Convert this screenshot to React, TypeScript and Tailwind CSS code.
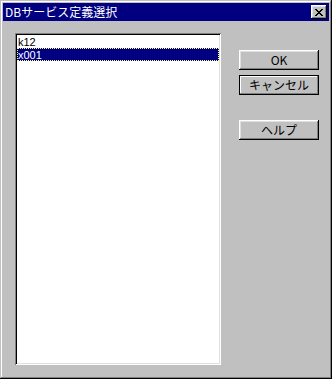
import React, { useState } from 'react';

const FONT = { fontFamily: '"Noto Sans CJK JP", "Liberation Sans", sans-serif' };

const items = ['k12', 'x001'];

function Win95Button({ label, isDefault = false }: { label: string; isDefault?: boolean }) {
  return (
    <button
      className={`w-[80px] h-[20px] bg-[#c0c0c0] text-[12px] leading-[12px] text-black flex items-center justify-center ${
        isDefault
          ? 'border border-black shadow-[inset_-1px_-1px_#808080,inset_1px_1px_#fff]'
          : 'shadow-[inset_-1px_-1px_#000,inset_1px_1px_#fff,inset_-2px_-2px_#808080,inset_2px_2px_#dfdfdf]'
      }`}
    >
      {label}
    </button>
  );
}

export default function App() {
  const [selected, setSelected] = useState(1);

  return (
    <div
      className="w-[332px] h-[379px] bg-[#c0c0c0] p-[3px] flex flex-col shadow-[inset_-1px_-1px_#000,inset_1px_1px_#c0c0c0,inset_-2px_-2px_#808080,inset_2px_2px_#fff]"
      style={FONT}
    >
      {/* Title bar */}
      <div className="h-[18px] bg-[#000080] flex items-center pl-[2px] pr-[2px] shrink-0">
        <span className="text-white text-[12px] leading-[12px] flex-1">DBサービス定義選択</span>
        <button className="w-[16px] h-[14px] bg-[#c0c0c0] flex items-center justify-center shadow-[inset_-1px_-1px_#000,inset_1px_1px_#fff,inset_-2px_-2px_#808080,inset_2px_2px_#dfdfdf]">
          <svg width="8" height="7" viewBox="0 0 8 7" shapeRendering="crispEdges">
            <path d="M0 0h2v1h-2zM6 0h2v1h-2zM1 1h2v1h-2zM5 1h2v1h-2zM2 2h4v1h-4zM3 3h2v1h-2zM2 4h4v1h-4zM1 5h2v1h-2zM5 5h2v1h-2zM0 6h2v1h-2zM6 6h2v1h-2z" fill="#000" />
          </svg>
        </button>
      </div>

      {/* Body */}
      <div className="flex pl-[12px] pt-[12px]">
        <div className="w-[206px] h-[332px] bg-white p-[2px] shadow-[inset_1px_1px_#808080,inset_-1px_-1px_#fff,inset_2px_2px_#000,inset_-2px_-2px_#dfdfdf]">
          {items.map((it, i) => (
            <div
              key={it}
              onClick={() => setSelected(i)}
              className={`h-[13px] pl-[1px] flex items-center ${
                i === selected
                  ? 'bg-[#000080] text-white outline-1 outline-dotted outline-[#ffff80] -outline-offset-1'
                  : 'text-black'
              }`}
            >
              <span className="text-[11px] leading-[12px] font-['Liberation_Sans',sans-serif]">{it}</span>
            </div>
          ))}
        </div>

        <div className="flex flex-col ml-[18px] pt-[17px]">
          <Win95Button label="OK" />
          <div className="h-[5px]" />
          <Win95Button label="キャンセル" isDefault />
          <div className="h-[25px]" />
          <Win95Button label="ヘルプ" />
        </div>
      </div>
    </div>
  );
}
